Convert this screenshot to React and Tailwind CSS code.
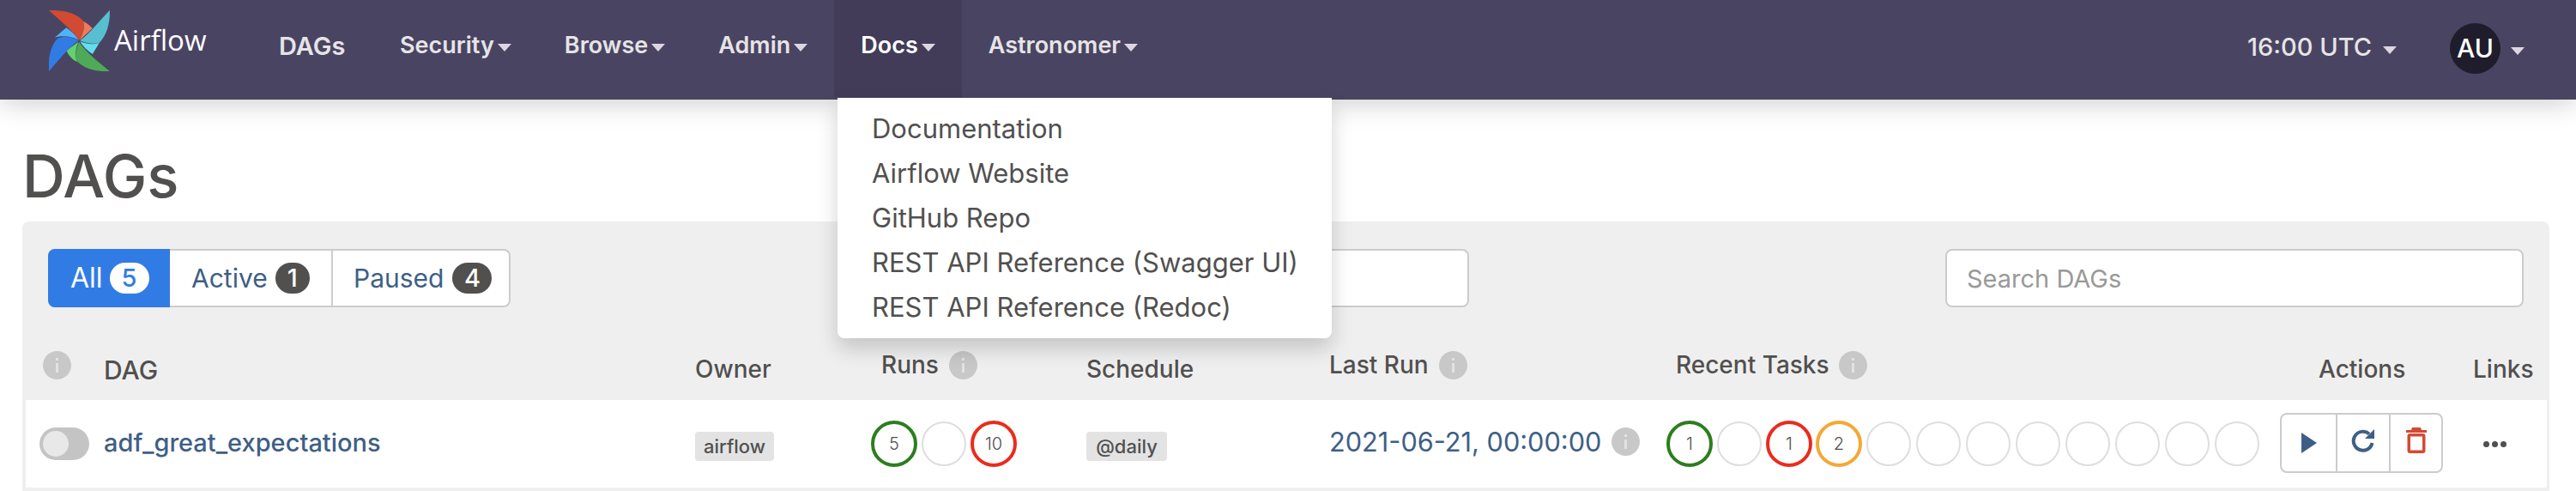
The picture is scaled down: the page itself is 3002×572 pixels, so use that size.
import { Fragment } from 'react';

const cols = 'grid grid-cols-[91px_689px_206px_250px_283px_394px_714px_225px_86px]';

function Caret({ className = 'border-t-[9px] border-x-[8px]' }) {
  return <span className={`inline-block w-0 h-0 border-x-transparent border-t-[#ddd5e0] ${className}`} />;
}

function Logo() {
  return (
    <svg viewBox="80 37 212 213" className="w-[71px] h-[71px] shrink-0">
      <path d="M80 37C130 35 180 48 200 75C206 95 198 120 186 142C160 105 120 75 80 37Z" fill="#d14a31" />
      <path d="M200 75C214 83 224 91 232 100L187 141C200 115 206 95 200 75Z" fill="#f1795b" />
      <path d="M292 37C294 80 282 125 256 150C235 157 210 152 188 143C225 115 255 75 292 37Z" fill="#56c0d0" />
      <path d="M188 146C210 155 235 158 256 150L232 190C215 180 200 165 188 146Z" fill="#62dfee" />
      <path d="M292 250C250 252 205 245 178 215C170 195 175 170 185 147C210 185 250 215 292 250Z" fill="#4faa58" />
      <path d="M183 147C172 170 170 195 178 218C160 208 148 195 141 178Z" fill="#62d26e" />
      <path d="M80 250C76 205 85 160 110 135C135 125 160 130 184 143C145 170 115 210 80 250Z" fill="#317ce4" />
      <path d="M184 141C160 128 130 123 100 132L140 98C155 108 172 122 184 141Z" fill="#4fb3fb" />
    </svg>
  );
}

function Info() {
  return (
    <svg viewBox="0 0 33 33" className="w-[33px] h-[33px] shrink-0">
      <circle cx="16.5" cy="16.5" r="16.5" fill="#c8c8c8" />
      <rect x="15" y="14" width="3" height="11" fill="#e2e2e2" />
      <rect x="15" y="8" width="3" height="3" fill="#e2e2e2" />
    </svg>
  );
}

function Circle({ color, n }) {
  if (!color) return <div className="w-[52px] h-[52px] rounded-full border-2 border-[#dedede] bg-white" />;
  return (
    <div className={`w-[54px] h-[54px] -mx-px rounded-full border-[4px] ${color} bg-white flex items-center justify-center text-[20px] font-light text-[#51504f]`}>
      {n}
    </div>
  );
}

function Count({ n, className }) {
  return (
    <span className={`h-[36px] rounded-full flex items-center justify-center text-[29px] font-medium ${className}`}>
      {n}
    </span>
  );
}

const navItems = ['Security', 'Browse', 'Admin', 'Docs', 'Astronomer'];
const docs = ['Documentation', 'Airflow Website', 'GitHub Repo', 'REST API Reference (Swagger UI)', 'REST API Reference (Redoc)'];
const tasks = [
  ['border-[#2b7e1d]', 1], null, ['border-[#ea2c1d]', 1], ['border-[#f4a836]', 2],
  null, null, null, null, null, null, null, null,
];

export default function App() {
  return (
    <div className="relative w-[3002px] h-[572px] overflow-hidden bg-white font-['Inter',sans-serif] text-[#51504f]">
      {/* NAV */}
      <nav className="relative z-10 h-[116px] bg-[#4a4463] shadow-[0_4px_30px_rgba(0,0,0,0.2)] flex items-start">
        <div className="ml-[57px] w-[237px] mt-[12px] flex items-center">
          <Logo />
          <span className="ml-[5px] -mt-[2px] font-['Open_Sans',sans-serif] text-[33px] text-white">Airflow</span>
        </div>
        <a className="h-[113px] w-[141px] pt-[32px] pl-[31px] text-[29px] font-semibold text-[#e6e4e6]">DAGs</a>
        {navItems.map((item) => (
          <a
            key={item}
            className={`h-[113px] pt-[33px] px-[31px] text-[27px] font-semibold flex items-start gap-[4px] ${item === 'Docs' ? 'bg-[#423c59] text-white' : 'text-[#e6e4e6]'}`}
          >
            {item}
            <span className="mt-[18px] flex"><Caret /></span>
          </a>
        ))}
        <div className="ml-auto flex items-center h-[113px] text-[#e6e4e6]">
          <span className="text-[29px] font-medium -mt-[4px]">16:00 UTC</span>
          <span className="ml-[13px] flex mt-[3px]"><Caret /></span>
          <span className="ml-[62px] w-[59px] h-[59px] rounded-full bg-[#1f1d2b] text-white flex items-center justify-center text-[30px] font-medium">AU</span>
          <span className="ml-[12px] mr-[60px] flex mt-[5px]"><Caret /></span>
        </div>
      </nav>

      {/* DOCS MENU */}
      <div className="absolute z-20 left-[976px] top-[114px] w-[576px] h-[280px] py-[10px] bg-white rounded-b-[8px] shadow-[0_12px_24px_rgba(0,0,0,0.18)]">
        {docs.map((d) => (
          <div key={d} className="h-[52px] pl-[40px] flex items-center text-[31px] text-[#51504f]">{d}</div>
        ))}
      </div>

      <main className="px-[26px] pr-[31px]">
        <h1 className="h-[142px] pt-[49px] text-[69px] leading-[80px] font-medium">DAGs</h1>

        <div className="bg-[#efefef] rounded-t-[8px] pt-[32px] px-[4px] pr-[3px] h-[400px]">
          {/* FILTERS */}
          <div className="flex items-start pl-[26px] pr-[27px]">
            <div className="flex h-[68px] w-[539px] rounded-[8px] border-2 border-[#cccccc] bg-white text-[30px] text-[#3e5f85]">
              <div className="w-[142px] -m-[2px] mr-0 rounded-l-[8px] bg-[#317ce4] text-white flex items-center pl-[26px] gap-[8px]">
                <span className="text-[32px]">All</span> <Count n="5" className="w-[46px] bg-white text-[#317ce4]" />
              </div>
              <div className="w-[190px] border-r-2 border-[#cccccc] flex items-center pl-[25px] gap-[9px]">
                Active <Count n="1" className="w-[40px] bg-[#51504f] text-white" />
              </div>
              <div className="flex-1 flex items-center pl-[24px] gap-[10px]">
                Paused <Count n="4" className="w-[46px] bg-[#51504f] text-white" />
              </div>
            </div>
            <input className="ml-[605px] w-[512px] h-[68px] rounded-[8px] border-2 border-[#cccccc] bg-white" />
            <input
              placeholder="Search DAGs"
              className="ml-auto w-[674px] h-[68px] rounded-[8px] border-2 border-[#cccccc] bg-white px-[23px] text-[29px] placeholder:text-[#999999] outline-none"
            />
          </div>

          {/* HEADER */}
          <div className={`${cols} h-[108px] text-[28px] font-medium`}>
            <div className="pl-[20px] pt-[51px]"><Info /></div>
            <div className="pt-[51px] text-[30px]">DAG</div>
            <div className="pt-[51px]">Owner</div>
            <div className="pl-[11px] pt-[51px] flex items-start gap-[12px]"><span className="-mt-[5px]">Runs</span><Info /></div>
            <div className="pt-[51px]">Schedule</div>
            <div className="pt-[51px] flex items-start gap-[12px]"><span className="-mt-[5px]">Last Run</span><Info /></div>
            <div className="pl-[10px] pt-[51px] flex items-start gap-[12px]"><span className="-mt-[5px] w-[178px] whitespace-nowrap">Recent Tasks</span><Info /></div>
            <div className="pl-[45px] pt-[51px]">Actions</div>
            <div className="pt-[51px]">Links</div>
          </div>

          {/* ROW */}
          <div className={`${cols} h-[102px] bg-white items-center border-b-0`}>
            <div className="pl-[16px]">
              <div className="w-[58px] h-[38px] rounded-full bg-[#c4c4c4] flex items-center pl-[4px]">
                <div className="w-[30px] h-[30px] rounded-full bg-[#e8e8e8]" />
              </div>
            </div>
            <a className="text-[29px] font-medium text-[#3e5f85] -mt-[2px]">adf_great_expectations</a>
            <div>
              <span className="inline-flex items-center h-[34px] w-[92px] justify-center rounded-[4px] bg-[#e3e3e3] text-[22px] font-medium mt-[6px]">airflow</span>
            </div>
            <div className="flex items-center gap-[6px]">
              <Circle color="border-[#2b7e1d]" n={5} />
              <Circle />
              <Circle color="border-[#ea2c1d]" n={10} />
            </div>
            <div>
              <span className="inline-flex items-center h-[34px] w-[94px] justify-center rounded-[4px] bg-[#e3e3e3] text-[22px] font-medium mt-[6px]">@daily</span>
            </div>
            <div className="flex items-center gap-[12px] text-[30.7px] text-[#3e5f85] -mt-[4px]">
              <span>2021-06-21, 00:00:00</span>
              <Info />
            </div>
            <div className="flex items-center gap-[6px]">
              {tasks.map((t, i) => (
                <Fragment key={i}>{t ? <Circle color={t[0]} n={t[1]} /> : <Circle />}</Fragment>
              ))}
            </div>
            <div className="flex">
              <div className="flex h-[70px] w-[190px] rounded-[8px] border-2 border-[#cccccc] -mt-[2px]">
                <div className="w-[65px] flex items-center justify-center border-r-2 border-[#cccccc]">
                  <svg viewBox="0 0 18 24" className="w-[18px] h-[24px]"><path d="M0 0L18 12L0 24Z" fill="#3e5f85" /></svg>
                </div>
                <div className="w-[62px] flex items-center justify-center border-r-2 border-[#cccccc]">
                  <svg viewBox="0 0 28 28" className="w-[28px] h-[28px] -mt-[6px]">
                    <path d="M21 6.5A11 11 0 1 0 24.5 17" fill="none" stroke="#3e5f85" strokeWidth="4" />
                    <path d="M27 1V12H16Z" fill="#3e5f85" />
                  </svg>
                </div>
                <div className="flex-1 flex items-center justify-center">
                  <svg viewBox="0 0 24 30" className="w-[24px] h-[30px] -mt-[6px]">
                    <path d="M6 3L7 0H17L18 3H24V6H0V3Z" fill="#d34a33" />
                    <rect x="3.25" y="8.75" width="17.5" height="19.5" rx="1.5" fill="none" stroke="#d34a33" strokeWidth="3.5" />
                  </svg>
                </div>
              </div>
            </div>
            <div className="flex gap-[3px] pl-[12px]">
              <span className="w-[7px] h-[7px] rounded-full bg-[#51504f]" />
              <span className="w-[7px] h-[7px] rounded-full bg-[#51504f]" />
              <span className="w-[7px] h-[7px] rounded-full bg-[#51504f]" />
            </div>
          </div>
        </div>
      </main>
    </div>
  );
}
